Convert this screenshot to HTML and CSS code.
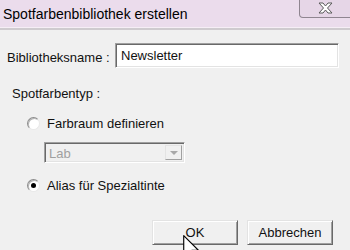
FILE: index.html
```html
<!DOCTYPE html>
<html>
<head>
<meta charset="utf-8">
<link rel="stylesheet" href="styles.css">
</head>
<body>
<div class="window">
  <div class="titlebar">
    <span class="title">Spotfarbenbibliothek erstellen</span>
    <div class="close">
      <svg width="15" height="12" viewBox="0 0 15 12"><path d="M1,1 L5,1 L7.5,4 L10,1 L14,1 L9.5,6 L14,11 L10,11 L7.5,8 L5,11 L1,11 L5.5,6 Z" fill="#fff" stroke="#5a5a5a" stroke-width="1" stroke-linejoin="round"/></svg>
    </div>
  </div>
  <div class="content">
    <div class="name-row">
      <span class="name-label">Bibliotheksname :</span>
      <div class="field">Newsletter</div>
    </div>
    <div class="group-label">Spotfarbentyp :</div>
    <div class="radio-row">
      <span class="radio"></span>
      <span class="radio-text">Farbraum definieren</span>
    </div>
    <div class="combo">
      <span class="combo-text">Lab</span>
      <span class="combo-btn"><span class="arrow"></span></span>
    </div>
    <div class="radio-row second">
      <span class="radio checked"></span>
      <span class="radio-text">Alias für Spezialtinte</span>
    </div>
    <div class="buttons">
      <div class="btn">OK</div>
      <div class="btn">Abbrechen</div>
    </div>
  </div>
  <svg class="cursor" width="18" height="28" viewBox="0 0 14 22"><path d="M0.5,0.5 L0.5,17 L4.5,13 L7.5,20 L10,19 L7,12 L12,12 Z" fill="#fff" stroke="#000" stroke-width="0.9" stroke-linejoin="round"/></svg>
</div>
</body>
</html>
```
FILE: styles.css
```css
* { box-sizing: border-box; }
html, body { margin: 0; padding: 0; }
body {
  width: 350px;
  height: 250px;
  overflow: hidden;
  font-family: "Liberation Sans", Arial, sans-serif;
  font-size: 13px;
  color: #111;
  background: #f0f0f0;
}
.window {
  position: relative;
  width: 350px;
  height: 250px;
  overflow: hidden;
  background: #f0f0f0;
}
.titlebar {
  height: 30px;
  display: flex;
  justify-content: space-between;
  align-items: flex-start;
  background: #ebdcec;
  border-bottom: 2px solid #cfcbcf;
  box-shadow: inset 0 -1px 0 #f6eef6;
}
.title {
  font-size: 14px;
  line-height: 16px;
  padding: 6px 0 0 3px;
  color: #000;
}
.close {
  width: 54px;
  height: 18px;
  margin-right: -3px;
  border: 1px solid #8f8590;
  border-top: none;
  border-bottom-left-radius: 4px;
  background: #e6d6e7;
  display: flex;
  justify-content: center;
  align-items: flex-start;
  padding-top: 2px;
  padding-right: 2px;
}
.content {
  padding: 13px 0 0 7px;
  display: flex;
  flex-direction: column;
}
.name-row {
  display: flex;
  align-items: center;
  height: 25px;
}
.name-label {
  width: 108px;
  padding-top: 3px;
}
.field {
  width: 224px;
  height: 25px;
  background: #fff;
  border-top: 1px solid #a0a0a0;
  border-left: 1px solid #a0a0a0;
  border-right: 1px solid #fff;
  border-bottom: 1px solid #fff;
  box-shadow: inset 1px 1px 0 #696969, inset -1px -1px 0 #e3e3e3;
  padding: 4px 0 0 5px;
  line-height: 16px;
}
.group-label {
  margin-top: 18px;
  padding-left: 5px;
  line-height: 16px;
}
.radio-row {
  display: flex;
  align-items: center;
  height: 16px;
  margin-top: 13px;
  margin-left: 20px;
}
.radio-row.second {
  margin-top: 14px;
}
.radio {
  width: 13px;
  height: 13px;
  border-radius: 50%;
  border: 1px solid #8c8c8c;
  border-right-color: #e8e8e8;
  border-bottom-color: #e8e8e8;
  background: #fff;
  box-shadow: inset 1px 1px 0 #b5b5b5;
  position: relative;
}
.radio.checked::after {
  content: "";
  position: absolute;
  left: 3px;
  top: 3px;
  width: 5px;
  height: 5px;
  border-radius: 50%;
  background: #000;
}
.radio-text {
  margin-left: 7px;
}
.combo {
  margin-top: 11px;
  margin-left: 37px;
  width: 141px;
  height: 21px;
  display: flex;
  align-items: stretch;
  background: #f0f0f0;
  border-top: 1px solid #a0a0a0;
  border-left: 1px solid #a0a0a0;
  border-right: 1px solid #fff;
  border-bottom: 1px solid #fff;
  box-shadow: inset 1px 1px 0 #696969, inset -1px -1px 0 #e3e3e3;
  padding: 2px;
}
.combo-text {
  flex: 1;
  color: #a0a0a0;
  padding: 1px 0 0 2px;
  line-height: 16px;
}
.combo-btn {
  width: 17px;
  background: #f0f0f0;
  border-top: 1px solid #e3e3e3;
  border-left: 1px solid #e3e3e3;
  border-right: 1px solid #a0a0a0;
  border-bottom: 1px solid #a0a0a0;
  display: flex;
  justify-content: center;
  align-items: center;
}
.arrow {
  width: 0;
  height: 0;
  border-left: 4px solid transparent;
  border-right: 4px solid transparent;
  border-top: 4px solid #a8a8a8;
  margin-top: 1px;
}
.buttons {
  display: flex;
  gap: 9px;
  margin-top: 27px;
  margin-left: 145px;
}
.btn {
  width: 86px;
  height: 25px;
  display: flex;
  justify-content: center;
  align-items: center;
  background: #f0f0f0;
  border-top: 1px solid #e3e3e3;
  border-left: 1px solid #e3e3e3;
  border-right: 1px solid #696969;
  border-bottom: 1px solid #696969;
  box-shadow: inset 1px 1px 0 #fff, inset -1px -1px 0 #a0a0a0;
}
.cursor {
  position: absolute;
  left: 183px;
  top: 235px;
}
```
